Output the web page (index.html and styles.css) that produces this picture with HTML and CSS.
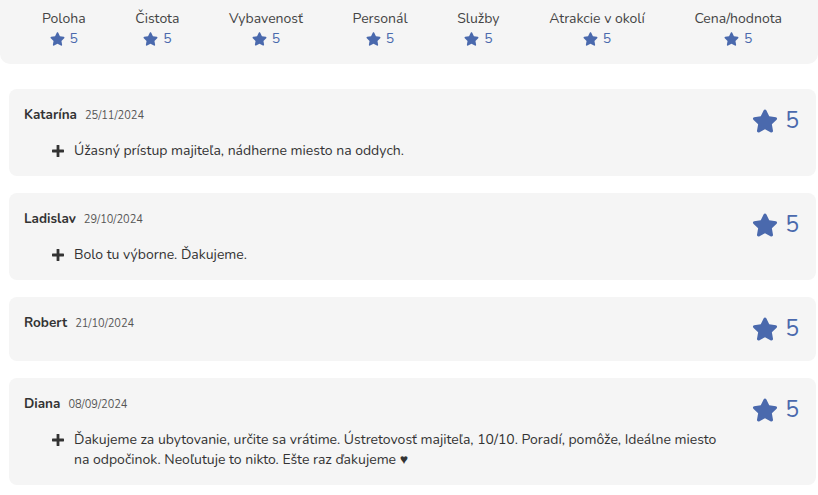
FILE: index.html
```html
<!DOCTYPE html>
<html>
	<head>
		<meta charset="utf-8" />
		<title>Hodnotenia</title>
		<link rel="stylesheet" href="styles.css">
	</head>
	<body>
<svg width="0" height="0" class="defs">
    <symbol id="star" viewBox="0 0 576 512">
        <path d="M259.3 17.8L194 150.2 47.9 171.5c-26.2 3.8-36.7 36.1-17.7 54.6l105.7 103-25 145.5c-4.5 26.3 23.2 46 46.4 33.7L288 439.6l130.7 68.7c23.2 12.2 50.9-7.4 46.4-33.7l-25-145.5 105.7-103c19-18.5 8.5-50.8-17.7-54.6L382 150.2 316.7 17.8c-11.7-23.6-45.6-23.9-57.4 0z"/>
    </symbol>
    <symbol id="plus" viewBox="0 0 12 12">
        <rect x="4.6" y="0" width="2.8" height="12" rx="0.6"/>
        <rect x="0" y="4.6" width="12" height="2.8" rx="0.6"/>
    </symbol>
</svg>

<div class="summary">
    <div class="cat"><span class="cat-name">Poloha</span><span class="cat-score"><svg class="star-sm"><use href="#star"/></svg>5</span></div>
    <div class="cat"><span class="cat-name">Čistota</span><span class="cat-score"><svg class="star-sm"><use href="#star"/></svg>5</span></div>
    <div class="cat"><span class="cat-name">Vybavenosť</span><span class="cat-score"><svg class="star-sm"><use href="#star"/></svg>5</span></div>
    <div class="cat"><span class="cat-name">Personál</span><span class="cat-score"><svg class="star-sm"><use href="#star"/></svg>5</span></div>
    <div class="cat"><span class="cat-name">Služby</span><span class="cat-score"><svg class="star-sm"><use href="#star"/></svg>5</span></div>
    <div class="cat"><span class="cat-name">Atrakcie v okolí</span><span class="cat-score"><svg class="star-sm"><use href="#star"/></svg>5</span></div>
    <div class="cat"><span class="cat-name">Cena/hodnota</span><span class="cat-score"><svg class="star-sm"><use href="#star"/></svg>5</span></div>
</div>

<div class="reviews">
    <div class="review">
        <div class="review-main">
            <div class="review-head"><span class="author">Katarína</span><span class="date">25/11/2024</span></div>
            <div class="review-text"><svg class="plus"><use href="#plus"/></svg><p>Úžasný prístup majiteľa, nádherne miesto na oddych.</p></div>
        </div>
        <div class="rating"><svg class="star-lg"><use href="#star"/></svg>5</div>
    </div>
    <div class="review">
        <div class="review-main">
            <div class="review-head"><span class="author">Ladislav</span><span class="date">29/10/2024</span></div>
            <div class="review-text"><svg class="plus"><use href="#plus"/></svg><p>Bolo tu výborne. Ďakujeme.</p></div>
        </div>
        <div class="rating"><svg class="star-lg"><use href="#star"/></svg>5</div>
    </div>
    <div class="review">
        <div class="review-main">
            <div class="review-head"><span class="author">Robert</span><span class="date">21/10/2024</span></div>
        </div>
        <div class="rating"><svg class="star-lg"><use href="#star"/></svg>5</div>
    </div>
    <div class="review">
        <div class="review-main">
            <div class="review-head"><span class="author">Diana</span><span class="date">08/09/2024</span></div>
            <div class="review-text"><svg class="plus"><use href="#plus"/></svg><p>Ďakujeme za ubytovanie, určite sa vrátime. Ústretovosť majiteľa, 10/10. Poradí, pomôže, Ideálne miesto na odpočinok. Neoľutuje to nikto. Ešte raz ďakujeme ♥</p></div>
        </div>
        <div class="rating"><svg class="star-lg"><use href="#star"/></svg>5</div>
    </div>
</div>
	</body>
</html>
```

FILE: styles.css
```css
* {
    margin: 0;
    padding: 0;
    box-sizing: border-box;
}
body {
    font-family: "Nunito", "Lato", "Open Sans", sans-serif;
    color: #333;
    background: #fff;
}
.defs {
    position: absolute;
}
.summary {
    display: flex;
    justify-content: space-between;
    height: 64px;
    padding: 9px 36px 0 42px;
    background: #f5f5f5;
    border-radius: 0 0 10px 10px;
}
.cat {
    display: flex;
    flex-direction: column;
    align-items: center;
}
.cat-name {
    font-size: 14px;
    line-height: 20px;
    color: #444;
}
.cat-score {
    display: flex;
    align-items: center;
    gap: 5px;
    font-size: 14px;
    line-height: 20px;
    color: #4a69ad;
}
.star-sm {
    width: 15px;
    height: 14px;
    fill: #4a69ad;
}
.reviews {
    display: flex;
    flex-direction: column;
    gap: 17px;
    margin: 25px 2px 0 9px;
}
.review {
    display: flex;
    justify-content: space-between;
    align-items: flex-start;
    padding: 17px 17px 15px 15px;
    background: #f5f5f5;
    border-radius: 8px;
}
.review-head {
    display: flex;
    align-items: baseline;
    line-height: 18px;
}
.author {
    font-size: 13.5px;
    font-weight: bold;
    color: #333;
}
.date {
    margin-left: 8px;
    font-size: 11px;
    color: #555;
}
.review-text {
    display: flex;
    align-items: flex-start;
    margin: 16px 0 0 28px;
    max-width: 680px;
}
.plus {
    flex: none;
    width: 12px;
    height: 12px;
    margin: 4px 10px 0 0;
    fill: #333;
}
.review-text p {
    font-size: 14px;
    line-height: 20px;
}
.rating {
    display: flex;
    align-items: center;
    gap: 7px;
    height: 30px;
    margin-bottom: 2px;
    font-size: 23px;
    line-height: 30px;
    color: #4a69ad;
}
.star-lg {
    width: 26px;
    height: 24px;
    fill: #4a69ad;
}
```
